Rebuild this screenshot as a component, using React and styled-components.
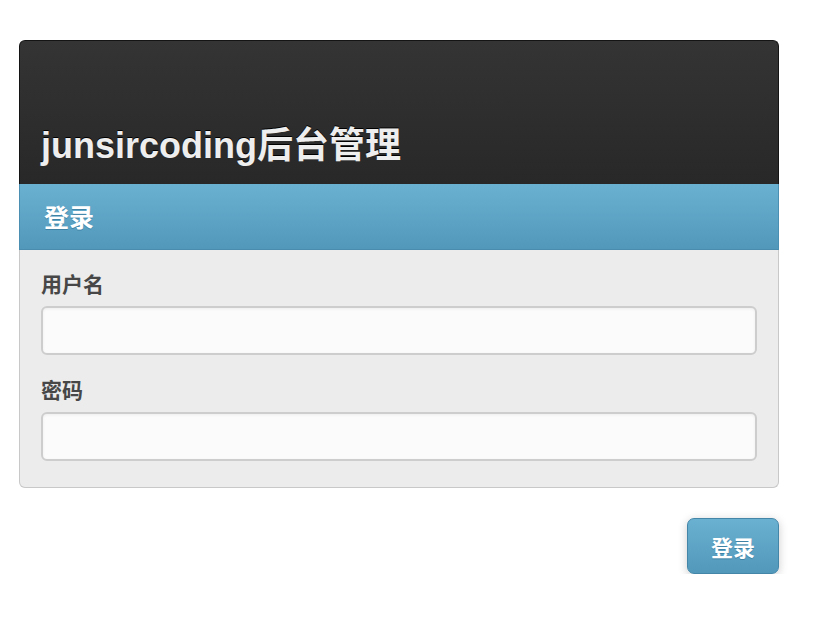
import React from 'react'
import styled, { createGlobalStyle } from 'styled-components'

const GlobalStyle = createGlobalStyle`
    html, body {
        margin: 0;
        padding: 0;
        background: #fff;
        font-family: "Liberation Sans", "Noto Sans CJK SC", sans-serif;
    }
`

export default function App() {
    return (
        <Page>
            <GlobalStyle />
            <Card>
                <Header>
                    <Title>junsircoding后台管理</Title>
                </Header>
                <Bar>登录</Bar>
                <Content>
                    <Label htmlFor="username">用户名</Label>
                    <Input id="username" type="text" />
                    <Label htmlFor="password" $spaced>密码</Label>
                    <Input id="password" type="password" />
                </Content>
            </Card>
            <Actions>
                <SubmitButton type="button">登录</SubmitButton>
            </Actions>
        </Page>
    )
}

const Page = styled.div`
    padding: 40px 39px 0 19px;
    display: flex;
    flex-direction: column;
`
const Card = styled.div`
    display: flex;
    flex-direction: column;
    width: 760px;
`
const Header = styled.div`
    height: 144px;
    box-sizing: border-box;
    display: flex;
    align-items: flex-end;
    padding: 0 0 17px 21px;
    background: linear-gradient(#343434, #282828);
    border: 1px solid #141414;
    border-bottom: none;
    border-radius: 6px 6px 0 0;
`
const Title = styled.h1`
    margin: 0;
    font-size: 36px;
    line-height: 43px;
    font-weight: bold;
    color: #eeeeee;
    text-shadow: 0 -1px 0 #000;
`
const Bar = styled.div`
    height: 66px;
    box-sizing: border-box;
    display: flex;
    align-items: center;
    padding: 0 0 2px 24px;
    background: linear-gradient(#6ab0d0, #5198bb);
    border-left: 1px solid #4b8fb2;
    border-right: 1px solid #4b8fb2;
    border-bottom: 1px solid #4a8cae;
    color: #fff;
    font-size: 25px;
    font-weight: bold;
    text-shadow: 0 1px 0 #3e83a6;
`
const Content = styled.div`
    display: flex;
    flex-direction: column;
    padding: 21px 21px 26px 21px;
    background: #ececec;
    border: 1px solid #c8c8c8;
    border-top: none;
    border-radius: 0 0 6px 6px;
`
const Label = styled.label`
    font-size: 21px;
    line-height: 28px;
    font-weight: bold;
    color: #474747;
    margin-top: ${p => p.$spaced ? '22px' : '0'};
    margin-bottom: 7px;
`
const Input = styled.input`
    height: 49px;
    box-sizing: border-box;
    border: 2px solid #cdcdcd;
    border-radius: 6px;
    background: #fbfbfb;
    box-shadow: inset 0 1px 3px rgba(0, 0, 0, 0.06);
    font-size: 18px;
    padding: 0 12px;
    outline: none;
`
const Actions = styled.div`
    display: flex;
    justify-content: flex-end;
    width: 760px;
    margin-top: 30px;
`
const SubmitButton = styled.button`
    width: 92px;
    height: 56px;
    border: 1px solid #4486a8;
    border-radius: 7px;
    background: linear-gradient(#6ab0d0, #5198bb);
    color: #fff;
    font-family: "Liberation Sans", "Noto Sans CJK SC", sans-serif;
    font-size: 22px;
    font-weight: bold;
    text-shadow: 0 1px 0 #3e83a6;
    box-shadow: 0 2px 10px rgba(0, 0, 0, 0.2);
    cursor: pointer;
`
